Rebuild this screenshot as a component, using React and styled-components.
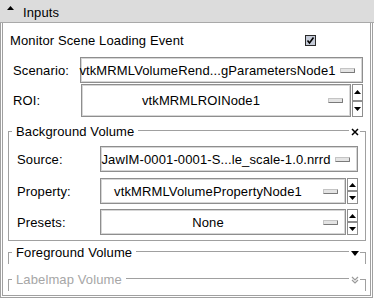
import React from 'react';
import styled, { createGlobalStyle } from 'styled-components';

const GlobalStyle = createGlobalStyle`
  html, body { margin: 0; padding: 0; background: #fff; }
  body {
    font-family: "Liberation Sans", Arial, Helvetica, sans-serif;
    font-size: 13px;
    letter-spacing: 0.12px;
    color: #000;
  }
`;

const LINE = '#a0a0a0';

const Root = styled.div`
  width: 374px;
  height: 302px;
  background: #fff;
  overflow: hidden;
`;

const Header = styled.div`
  height: 23px;
  box-sizing: border-box;
  background: #dcdcdc;
  border-bottom: 1px solid #a9a9a9;
  display: flex;
  align-items: flex-start;
  padding-left: 7px;
`;

const HeaderArrow = styled.svg`
  margin-top: 6px;
  margin-right: 9px;
  flex: none;
`;

const HeaderTitle = styled.span`
  line-height: 15px;
  margin-top: 5px;
`;

const Panel = styled.div`
  width: 373px;
  box-sizing: border-box;
  border: 3px double ${LINE};
  border-top: none;
  display: flex;
  flex-direction: column;
  padding-bottom: 4px;
`;

const CheckRow = styled.div`
  margin-top: 5px;
  height: 24px;
  display: flex;
  align-items: center;
  justify-content: space-between;
  padding: 0 54px 0 7px;
`;

const FieldRow = styled.div`
  display: flex;
  align-items: stretch;
  height: ${(p) => p.$h}px;
  margin-top: ${(p) => p.$mt}px;
  padding-left: ${(p) => p.$pl}px;
  padding-right: ${(p) => p.$pr}px;
`;

const Label = styled.span`
  width: ${(p) => p.$w}px;
  flex: none;
  display: flex;
  align-items: center;
`;

const ComboBox = styled.div`
  flex: 1;
  min-width: 0;
  box-sizing: border-box;
  border: 1px solid #8e8e8e;
  box-shadow: inset 1px 1px 0 #d6d6d6, inset -1px -1px 0 #d6d6d6;
  background: #fff;
  display: flex;
  align-items: center;
  padding-right: 7px;
`;

const ComboText = styled.span`
  flex: 1;
  min-width: 0;
  text-align: center;
  white-space: nowrap;
  display: flex;
  justify-content: center;
`;

const Indicator = styled.span`
  flex: none;
  width: 15px;
  height: 5px;
  box-sizing: border-box;
  margin-left: ${(p) => p.$ml}px;
  background: #e4e4e4;
  border: 1px solid;
  border-color: #c4c4c4 #7a7a7a #7a7a7a #c4c4c4;
  border-radius: 1px;
`;

const Spinner = styled.div`
  flex: none;
  width: 11px;
  margin-left: 1px;
  display: flex;
  flex-direction: column;
`;

const SpinButton = styled.div`
  flex: 1;
  box-sizing: border-box;
  border: 1px solid #8e8e8e;
  background: #fff;
  display: flex;
  align-items: center;
  justify-content: center;
`;

const Group = styled.div`
  margin: ${(p) => p.$mt}px 4px 0 5px;
  display: flex;
  flex-direction: column;
`;

const GroupHead = styled.div`
  height: 15px;
  display: flex;
  align-items: stretch;
`;

const TickLeft = styled.span`
  flex: none;
  width: 4px;
  height: 8px;
  align-self: flex-end;
  box-sizing: border-box;
  border-top: 1px solid ${LINE};
  border-left: 1px solid ${LINE};
`;

const TickRight = styled.span`
  flex: none;
  width: 6px;
  height: 8px;
  align-self: flex-end;
  box-sizing: border-box;
  border-top: 1px solid ${LINE};
  border-right: 1px solid ${LINE};
`;

const GroupTitle = styled.span`
  padding: 0 4px;
  line-height: 15px;
  white-space: nowrap;
  color: ${(p) => (p.$disabled ? '#a6a6a6' : '#000')};
`;

const HeadLine = styled.span`
  flex: 1;
  height: 8px;
  align-self: flex-end;
  border-top: 1px solid ${LINE};
`;

const HeadIcon = styled.svg`
  flex: none;
  align-self: center;
  margin: 1px 1px 0 2px;
`;

const GroupBody = styled.div`
  box-sizing: border-box;
  border: 1px solid ${LINE};
  border-top: none;
  border-bottom: ${(p) => (p.$collapsed ? 'none' : `1px solid ${LINE}`)};
  height: ${(p) => (p.$collapsed ? '4px' : 'auto')};
  padding: ${(p) => (p.$collapsed ? '0' : '7px 0 5px 0')};
  display: flex;
  flex-direction: column;
`;

const UpArrow = () => (
  <svg width="7" height="4" viewBox="0 0 7 4">
    <path d="M0 4 L3.5 0 L7 4 Z" fill="#000" />
  </svg>
);
const DownArrow = () => (
  <svg width="7" height="4" viewBox="0 0 7 4">
    <path d="M0 0 L3.5 4 L7 0 Z" fill="#000" />
  </svg>
);

const Combo = ({ text, indent = 8, spin = false }) => (
  <>
    <ComboBox>
      <ComboText>{text}</ComboText>
      <Indicator $ml={indent} />
    </ComboBox>
    {spin && (
      <Spinner>
        <SpinButton><UpArrow /></SpinButton>
        <SpinButton><DownArrow /></SpinButton>
      </Spinner>
    )}
  </>
);

const CheckBox = () => (
  <svg width="11" height="11" viewBox="0 0 11 11">
    <rect x="0.5" y="0.5" width="10" height="10" fill="#c5cbd8" stroke="#2a2a2a" />
    <path d="M2.5 5.5 L4.5 8 L8.5 2.5" fill="none" stroke="#000" strokeWidth="1.6" />
  </svg>
);

const CloseIcon = () => (
  <HeadIcon width="8" height="8" viewBox="0 0 8 8">
    <path d="M1 1 L7 7 M7 1 L1 7" stroke="#000" strokeWidth="1.5" />
  </HeadIcon>
);

const CollapseIcon = () => (
  <HeadIcon width="8" height="5" viewBox="0 0 8 5">
    <path d="M0 0 L4 5 L8 0 Z" fill="#000" />
  </HeadIcon>
);

const DisabledIcon = () => (
  <HeadIcon width="8" height="8" viewBox="0 0 8 8">
    <path d="M1 1 L4 4 L7 1 M1 4 L4 7 L7 4" fill="none" stroke="#9a9a9a" strokeWidth="1.2" />
  </HeadIcon>
);

const GroupFrame = ({ title, icon, mt, disabled, collapsed, children }) => (
  <Group $mt={mt}>
    <GroupHead>
      <TickLeft />
      <GroupTitle $disabled={disabled}>{title}</GroupTitle>
      <HeadLine />
      {icon}
      <TickRight />
    </GroupHead>
    <GroupBody $collapsed={collapsed}>{children}</GroupBody>
  </Group>
);

export default function App() {
  return (
    <Root>
      <GlobalStyle />
      <Header>
        <HeaderArrow width="7" height="4" viewBox="0 0 7 4">
          <path d="M0 4 L3.5 0 L7 4 Z" fill="#000" />
        </HeaderArrow>
        <HeaderTitle>Inputs</HeaderTitle>
      </Header>
      <Panel>
        <CheckRow>
          <span>Monitor Scene Loading Event</span>
          <CheckBox />
        </CheckRow>
        <FieldRow $h={26} $mt={5} $pl={10} $pr={7}>
          <Label $w={67}>Scenario:</Label>
          <Combo text="vtkMRMLVolumeRend...gParametersNode1" indent={6} />
        </FieldRow>
        <FieldRow $h={33} $mt={1} $pl={10} $pr={7}>
          <Label $w={68}>ROI:</Label>
          <Combo text="vtkMRMLROINode1" indent={8} spin />
        </FieldRow>
        <GroupFrame title="Background Volume" icon={<CloseIcon />} mt={7}>
          <FieldRow $h={26} $mt={0} $pl={8} $pr={7}>
            <Label $w={83}>Source:</Label>
            <Combo text="JawIM-0001-0001-S...le_scale-1.0.nrrd" indent={4} />
          </FieldRow>
          <FieldRow $h={26} $mt={6} $pl={8} $pr={7}>
            <Label $w={83}>Property:</Label>
            <Combo text="vtkMRMLVolumePropertyNode1" indent={8} spin />
          </FieldRow>
          <FieldRow $h={26} $mt={5} $pl={8} $pr={7}>
            <Label $w={83}>Presets:</Label>
            <Combo text="None" indent={8} spin />
          </FieldRow>
        </GroupFrame>
        <GroupFrame title="Foreground Volume" icon={<CollapseIcon />} mt={4} collapsed />
        <GroupFrame title="Labelmap Volume" icon={<DisabledIcon />} mt={8} collapsed disabled />
      </Panel>
    </Root>
  );
}
